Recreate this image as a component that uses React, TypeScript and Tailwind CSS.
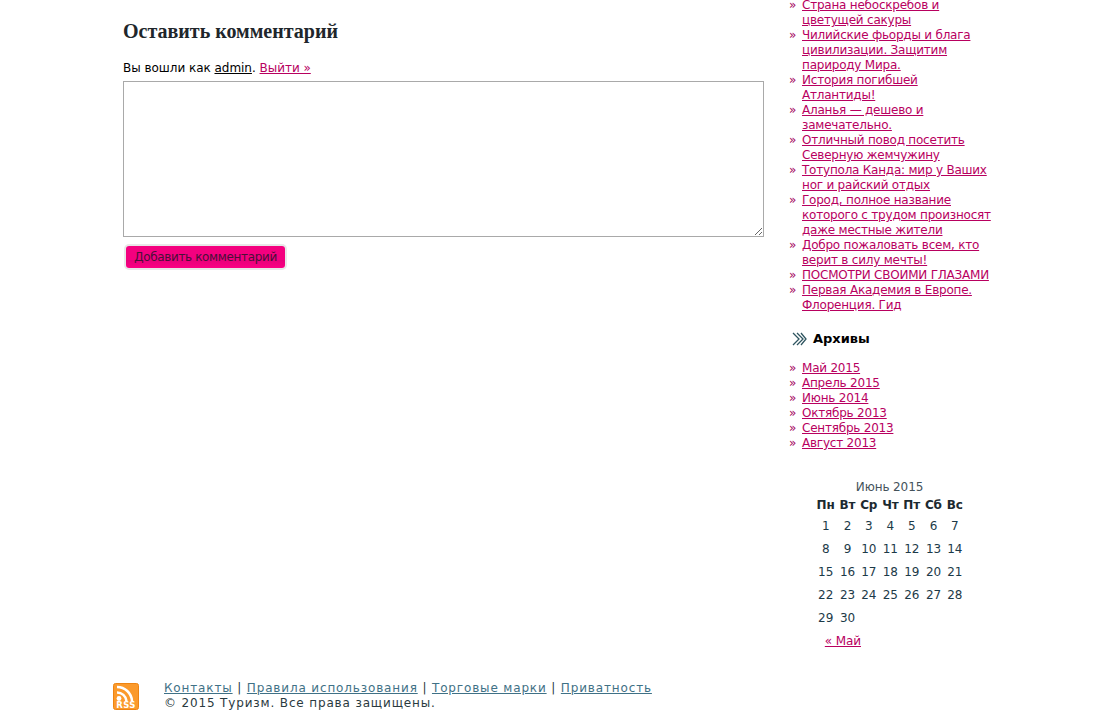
const recentPosts = [
  "Страна небоскребов и цветущей сакуры",
  "Чилийские фьорды и блага цивилизации. Защитим парироду Мира.",
  "История погибшей Атлантиды!",
  "Аланья — дешево и замечательно.",
  "Отличный повод посетить Северную жемчужину",
  "Тотупола Канда: мир у Ваших ног и райский отдых",
  "Город, полное название которого с трудом произносят даже местные жители",
  "Добро пожаловать всем, кто верит в силу мечты!",
  "ПОСМОТРИ СВОИМИ ГЛАЗАМИ",
  "Первая Академия в Европе. Флоренция. Гид",
];

const archives = ["Май 2015", "Апрель 2015", "Июнь 2014", "Октябрь 2013", "Сентябрь 2013", "Август 2013"];

const weekDays = ["Пн", "Вт", "Ср", "Чт", "Пт", "Сб", "Вс"];

const weeks = [
  [1, 2, 3, 4, 5, 6, 7],
  [8, 9, 10, 11, 12, 13, 14],
  [15, 16, 17, 18, 19, 20, 21],
  [22, 23, 24, 25, 26, 27, 28],
  [29, 30],
];

function LinkList({ items }: { items: string[] }) {
  return (
    <ul>
      {items.map((item) => (
        <li key={item} className="flex">
          <span className="w-[13px] shrink-0 text-[#a3005c]">»</span>
          <a href="#" className="w-[190px] tracking-[-0.22px] text-[#b8005f] underline">
            {item}
          </a>
        </li>
      ))}
    </ul>
  );
}

function RssIcon() {
  return (
    <svg width="26" height="27" viewBox="0 0 26 27" className="block">
      <rect x="0.5" y="0.5" width="25" height="26" rx="2" fill="#fb9a2c" stroke="#ee8412" />
      <path d="M4 9.5a9.5 9.5 0 0 1 9.5 8.5" fill="none" stroke="#fff" strokeWidth="2.5" />
      <path d="M4 4a15 15 0 0 1 15 14" fill="none" stroke="#fff" strokeWidth="2.5" />
      <circle cx="6" cy="15.5" r="2.4" fill="#fff" />
      <text x="13" y="25" textAnchor="middle" fontSize="8.5" letterSpacing="0.4" fontWeight="700" fill="#fff" fontFamily="'DejaVu Sans', sans-serif">
        RSS
      </text>
    </svg>
  );
}

export default function App() {
  return (
    <div className="flex h-[714px] w-[1119px] flex-col overflow-hidden bg-white font-['DejaVu_Sans',sans-serif] text-[12px] leading-[15px] text-[#1c1c1c]">
      <div className="flex h-[676px] pl-[123px]">
        {/* Comment form */}
        <main className="w-[641px] shrink-0 pt-[20px]">
          <h2 className="font-['Liberation_Serif',serif] text-[20px] leading-[22px] font-bold text-[#20262b]">
            Оставить комментарий
          </h2>
          <p className="mt-[19px] tracking-[-0.03px] text-black">
            Вы вошли как <a href="#" className="underline">admin</a>.{" "}
            <a href="#" className="text-[#b8005f] underline">Выйти »</a>
          </p>
          <textarea className="mt-[5px] block h-[156px] w-[641px] border border-[#a9a9a9] bg-white" />
          <button className="mt-[9px] ml-[3px] h-[22px] w-[159px] rounded-[3px] bg-[linear-gradient(#f4007f_0%,#f4007f_62%,#e8007a_64%,#fb0084_100%)] text-center text-[12px] tracking-[-0.35px] text-[#4a1038] shadow-[0_0_0_2px_#e8e8e8]">
            Добавить комментарий
          </button>
        </main>

        {/* Sidebar */}
        <aside className="ml-[25px] w-[205px] shrink-0">
          <div className="-mt-[2px]">
            <LinkList items={recentPosts} />
          </div>
          <h3 className="mt-[18px] flex items-center pl-[3px] text-[13px] leading-[15px] font-bold text-black">
            <svg width="15" height="14" viewBox="0 0 15 14" className="mr-[6px]" fill="none" stroke="#2f5560" strokeWidth="1.3">
              <path d="M1 1l6 6-6 6M5 1l6 6-6 6M9 1l5 6-5 6" />
            </svg>
            Архивы
          </h3>
          <div className="mt-[15px]">
            <LinkList items={archives} />
          </div>
          <table className="mt-[29px] ml-[25px] w-[151px] border-collapse text-center tracking-[-0.1px] text-[#1c3a48]">
            <caption className="pb-[3px] text-[#44525a]">Июнь 2015</caption>
            <thead>
              <tr>
                {weekDays.map((day) => (
                  <th key={day} className="p-0 font-bold text-[#1c2a30]">{day}</th>
                ))}
              </tr>
            </thead>
            <tbody>
              {weeks.map((week, w) => (
                <tr key={week[0]} className={w === 0 ? "h-[22px]" : "h-[23px]"}>
                  {weekDays.map((day, i) => (
                    <td key={day} className={w === 0 ? "p-0 pt-[5px]" : "p-0 pt-[6px]"}>{week[i]}</td>
                  ))}
                </tr>
              ))}
              <tr className="h-[23px]">
                <td colSpan={3} className="p-0 pt-[6px] pr-[8px]">
                  <a href="#" className="text-[#b8005f] underline">« Май</a>
                </td>
              </tr>
            </tbody>
          </table>
        </aside>
      </div>

      {/* Footer */}
      <footer className="flex pl-[113px] tracking-[0.85px] text-[#2a3a40]">
        <div className="mt-[7px] mr-[25px]">
          <RssIcon />
        </div>
        <div className="mt-[5px]">
          <p>
            <a href="#" className="text-[#3f7186] underline">Контакты</a> |{" "}
            <a href="#" className="text-[#3f7186] underline">Правила использования</a> |{" "}
            <a href="#" className="text-[#3f7186] underline">Торговые марки</a> |{" "}
            <a href="#" className="text-[#3f7186] underline">Приватность</a>
          </p>
          <p>© 2015 Туризм. Все права защищены.</p>
        </div>
      </footer>
    </div>
  );
}
